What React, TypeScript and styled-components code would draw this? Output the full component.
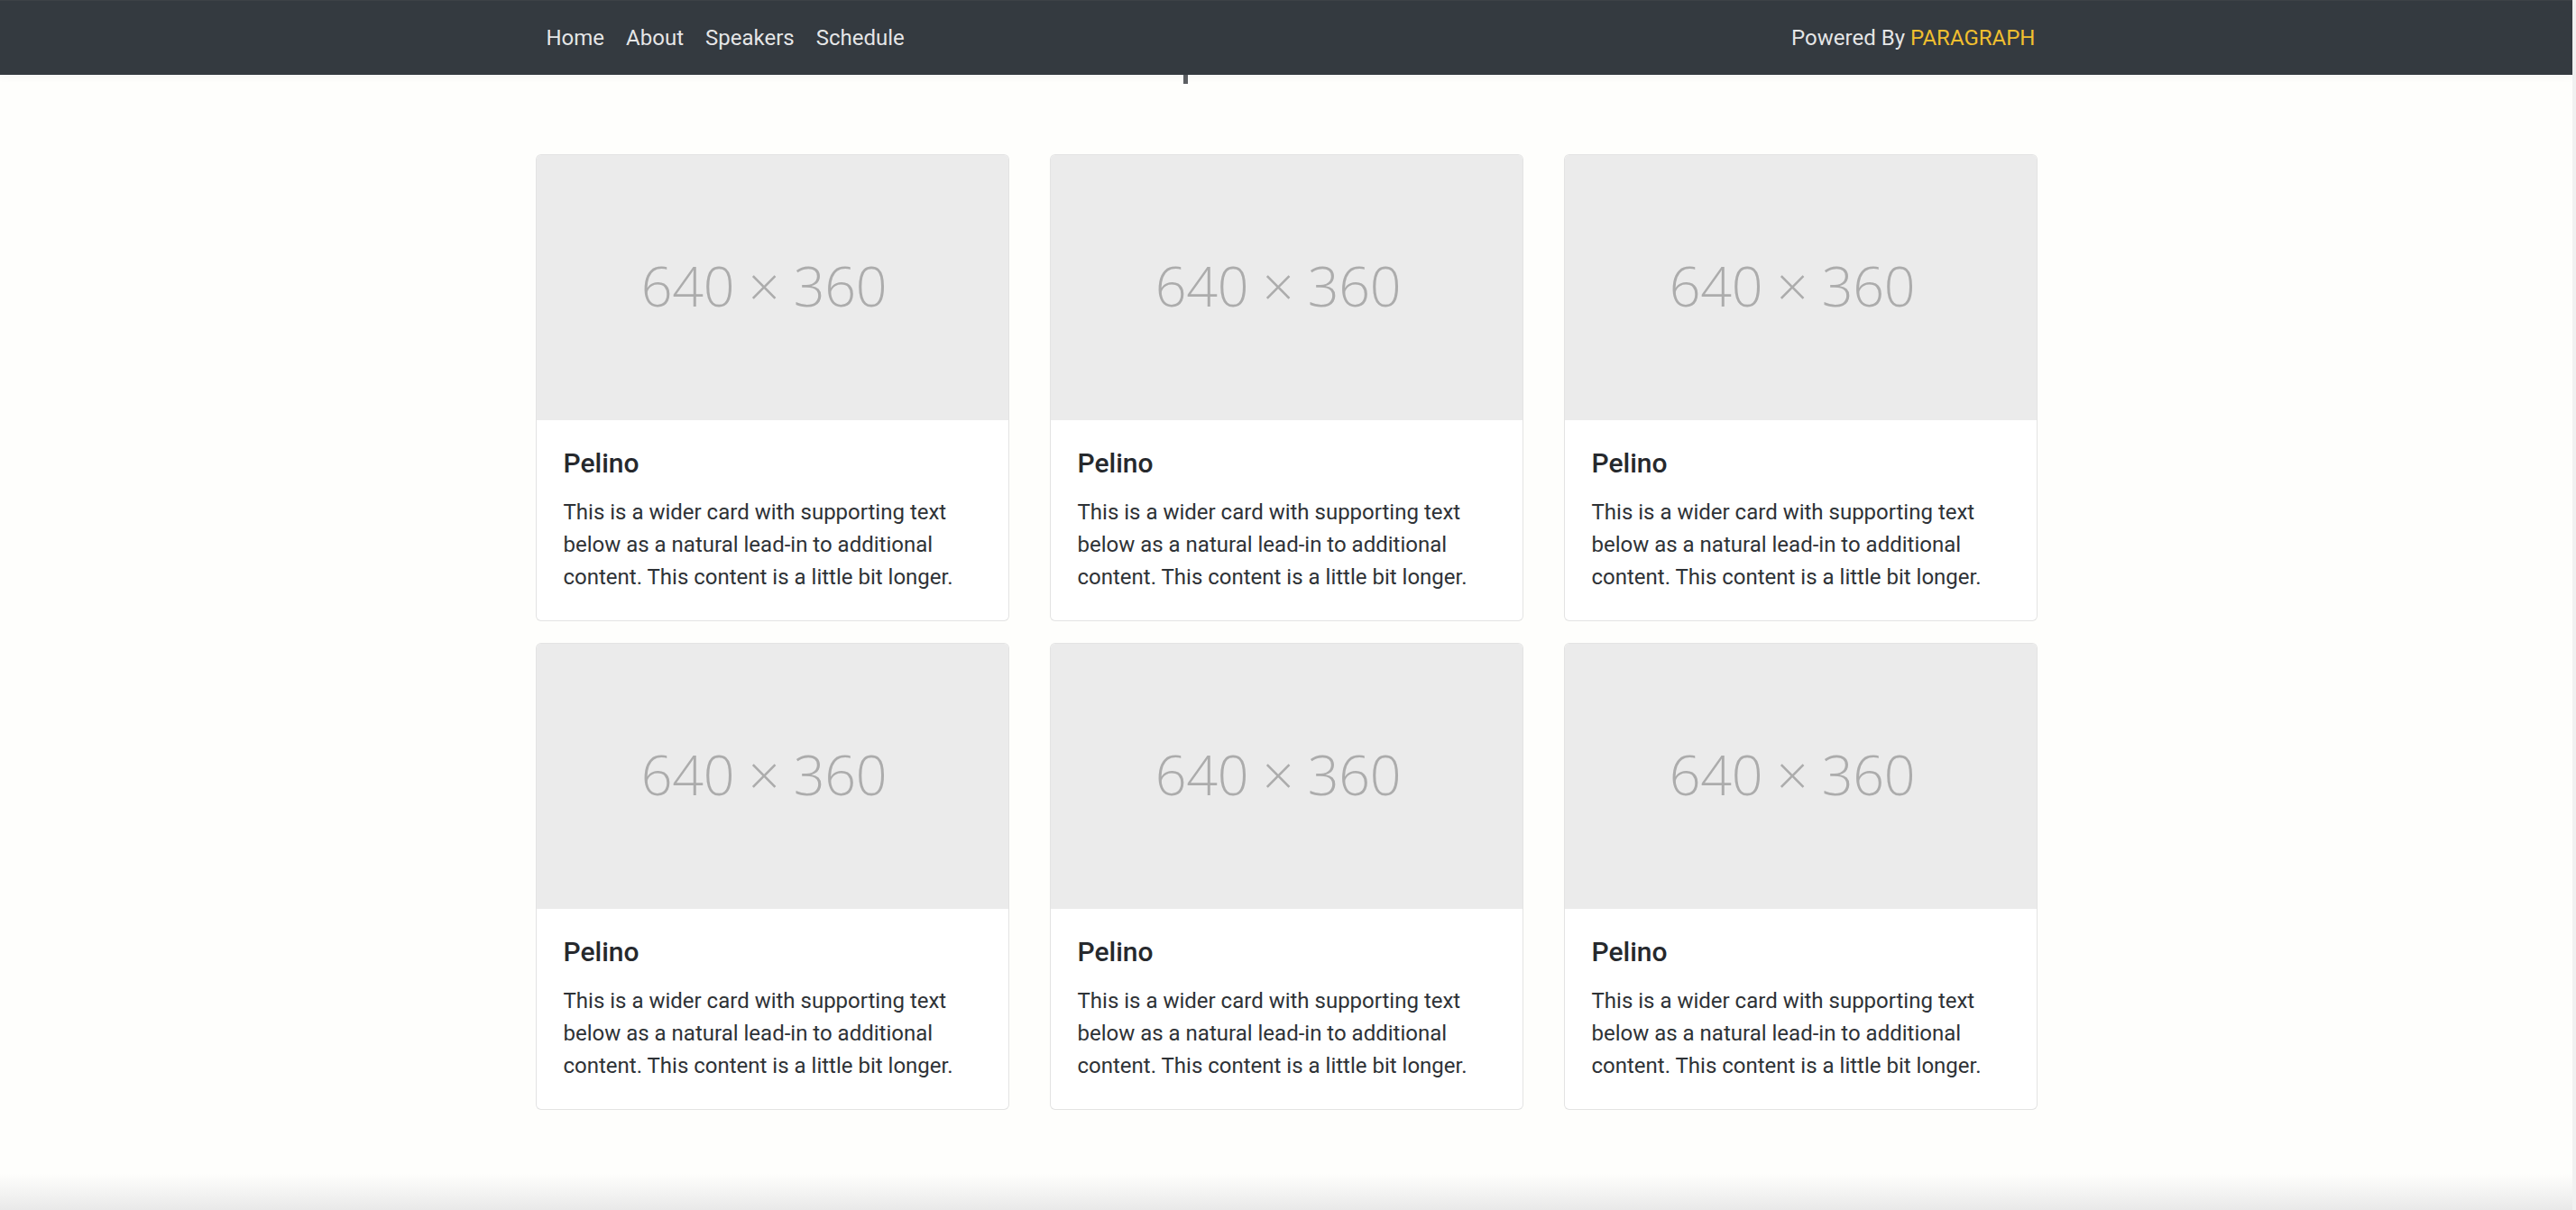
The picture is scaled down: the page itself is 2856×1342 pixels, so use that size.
import React from 'react';
import styled, { createGlobalStyle } from 'styled-components';

const GlobalStyle = createGlobalStyle`
  * {
    box-sizing: border-box;
  }

  html, body {
    margin: 0;
    padding: 0;
  }

  body {
    background: #f1f1f1;
    padding-right: 4px;
    font-family: Roboto, "Liberation Sans", Arial, sans-serif;
    color: #212529;
  }
`;

const Page = styled.div`
  min-height: 100vh;
  background: #fefefc;
  display: flex;
  flex-direction: column;
`;

const Navbar = styled.nav`
  height: 83px;
  background: #343a40;
  border-top: 1px solid #3d4247;
  box-shadow: 0 3px 8px rgba(60, 70, 90, 0.04);
  position: relative;
  z-index: 1;
`;

const NavInner = styled.div`
  width: 1665px;
  height: 100%;
  margin: 0 auto;
  display: flex;
  align-items: center;
  justify-content: space-between;
`;

const NavList = styled.ul`
  display: flex;
  list-style: none;
  margin: 0;
  padding: 0;
`;

const NavLink = styled.a`
  display: block;
  padding: 0 12px;
  font-size: 24px;
  line-height: 36px;
  color: rgba(255, 255, 255, 0.88);
  text-decoration: none;
`;

const NavText = styled.span`
  font-size: 24px;
  line-height: 36px;
  color: rgba(255, 255, 255, 0.88);
  padding-right: 2px;
`;

const Brand = styled.span`
  color: #f0bf2f;
`;

const Main = styled.main`
  width: 1665px;
  margin: 0 auto;
  padding-bottom: 60px;
`;

const Hero = styled.section`
  height: 88px;
`;

const HeroMark = styled.span`
  display: block;
  width: 5px;
  height: 10px;
  margin-left: 718px;
  background: #5c5f63;
`;

const CardGrid = styled.div`
  display: grid;
  grid-template-columns: repeat(3, 1fr);
  column-gap: 45px;
  row-gap: 24px;
`;

const Card = styled.article`
  background: #fff;
  border: 1.5px solid rgba(0, 0, 0, 0.11);
  border-radius: 6px;
  overflow: hidden;
  display: flex;
  flex-direction: column;
`;

const Placeholder = styled.div`
  aspect-ratio: 640 / 360;
  background: #ebebeb;
  display: flex;
  align-items: center;
  justify-content: center;
  padding: 0 18px 6px 0;
  font-family: "Open Sans", "DejaVu Sans", sans-serif;
  font-weight: 300;
  font-size: 61px;
  color: #acacac;
  letter-spacing: -0.3px;
`;

const CardBody = styled.div`
  padding: 30px;
`;

const CardTitle = styled.h5`
  margin: 0 0 18px;
  font-size: 30px;
  font-weight: 500;
  line-height: 1.2;
  color: #26292d;
`;

const CardText = styled.p`
  margin: 0;
  font-size: 24px;
  line-height: 1.5;
  color: #2e3236;
`;

const BottomFade = styled.div`
  margin-top: auto;
  height: 40px;
  background: linear-gradient(to bottom, rgba(235, 235, 235, 0), #e9e9e9);
`;

const links = ['Home', 'About', 'Speakers', 'Schedule'];

const speakers = Array.from({ length: 6 }, (_, i) => ({
  id: i,
  name: 'Pelino',
  text: 'This is a wider card with supporting text below as a natural lead-in to additional content. This content is a little bit longer.',
}));

const App: React.FC = () => {
  return (
    <>
      <GlobalStyle />
      <Page>
        <Navbar>
          <NavInner>
            <NavList>
              {links.map((l) => (
                <li key={l}>
                  <NavLink href="#">{l}</NavLink>
                </li>
              ))}
            </NavList>
            <NavText>
              Powered By <Brand>PARAGRAPH</Brand>
            </NavText>
          </NavInner>
        </Navbar>

        <Main>
          <Hero>
            <HeroMark />
          </Hero>
          <CardGrid>
            {speakers.map((s) => (
              <Card key={s.id}>
                <Placeholder>640 × 360</Placeholder>
                <CardBody>
                  <CardTitle>{s.name}</CardTitle>
                  <CardText>{s.text}</CardText>
                </CardBody>
              </Card>
            ))}
          </CardGrid>
        </Main>

        <BottomFade />
      </Page>
    </>
  );
};

export default App;
